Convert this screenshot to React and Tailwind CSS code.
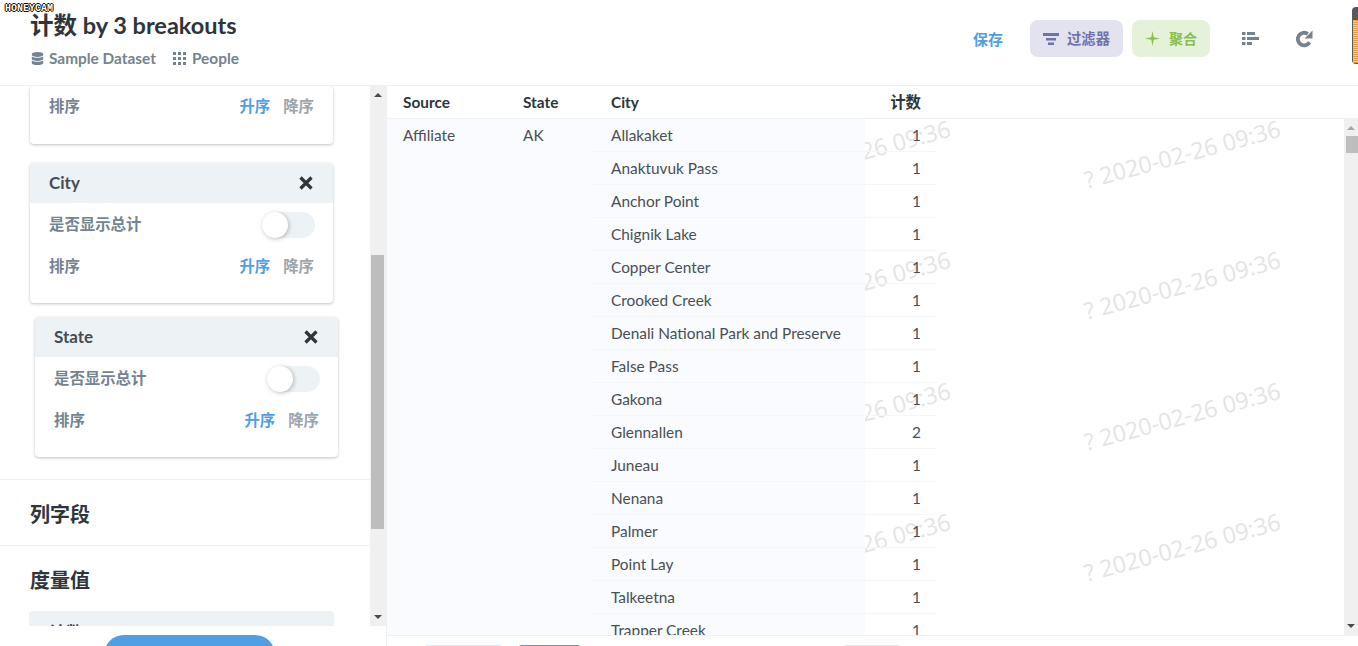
import React from "react";
import { FaDatabase } from "react-icons/fa";

const cities = [
  ["Allakaket", 1],
  ["Anaktuvuk Pass", 1],
  ["Anchor Point", 1],
  ["Chignik Lake", 1],
  ["Copper Center", 1],
  ["Crooked Creek", 1],
  ["Denali National Park and Preserve", 1],
  ["False Pass", 1],
  ["Gakona", 1],
  ["Glennallen", 2],
  ["Juneau", 1],
  ["Nenana", 1],
  ["Palmer", 1],
  ["Point Lay", 1],
  ["Talkeetna", 1],
  ["Trapper Creek", 1],
];

const font = "font-['Lato','Noto_Sans_CJK_SC',sans-serif]";

const GridIcon = () => (
  <svg width="13" height="13" viewBox="0 0 13 13" fill="#74838f">
    {[0, 5, 10].map((y) =>
      [0, 5, 10].map((x) => <rect key={`${x}-${y}`} x={x} y={y} width="3" height="3" />)
    )}
  </svg>
);

const FilterIcon = () => (
  <svg width="16" height="12" viewBox="0 0 16 12" fill="#7172ad">
    <rect x="0" y="0" width="16" height="3" />
    <rect x="3" y="5" width="10" height="2.5" />
    <rect x="5" y="9.5" width="6" height="2.5" />
  </svg>
);

const StarIcon = () => (
  <svg width="15" height="15" viewBox="0 0 15 15" fill="#88bf4d">
    <path d="M7.5 0 L8.7 6.3 L15 7.5 L8.7 8.7 L7.5 15 L6.3 8.7 L0 7.5 L6.3 6.3 Z" />
  </svg>
);

const BarsIcon = () => (
  <svg width="17" height="13" viewBox="0 0 17 13" fill="#74838f">
    <rect x="0" y="0" width="3.5" height="3" />
    <rect x="5" y="0" width="8" height="3" />
    <rect x="0" y="5" width="3.5" height="3" />
    <rect x="5" y="5" width="12" height="3" />
    <rect x="0" y="10" width="3.5" height="3" />
    <rect x="5" y="10" width="5" height="3" />
  </svg>
);

const RefreshIcon = () => (
  <svg width="18" height="18" viewBox="0 0 18 18" fill="none">
    <path d="M14.6 12.2 A6.3 6.3 0 1 1 12.8 3.9" stroke="#74838f" strokeWidth="3.8" />
    <path d="M17.5 0.5 L17.5 8.5 L9.5 8.5 Z" fill="#74838f" />
  </svg>
);

const CloseIcon = () => (
  <svg width="14" height="14" viewBox="0 0 14 14" stroke="#2e353b" strokeWidth="3.2">
    <path d="M1.5 1.5 L12.5 12.5 M12.5 1.5 L1.5 12.5" />
  </svg>
);

const SortRow = () => (
  <div className="flex items-center justify-between text-[15.4px] font-bold leading-5 text-[#74838f]">
    <span>排序</span>
    <span className="flex gap-[13px]">
      <span className="text-[#509ee3]">升序</span>
      <span className="text-[#9aa5ad]">降序</span>
    </span>
  </div>
);

const BreakoutCard = ({ name, className }) => (
  <div className={`w-[303px] rounded-sm bg-white shadow-[0_1px_3px_rgba(0,0,0,0.25)] ${className}`}>
    <div className="flex h-[40px] items-center justify-between rounded-t-sm bg-[#edf2f5] pl-[19px] pr-[20px]">
      <span className="text-[17px] font-bold text-[#444c54]">{name}</span>
      <CloseIcon />
    </div>
    <div className="px-[19px] pb-[27px] pt-[9px]">
      <div className="mb-[18px] flex items-center justify-between text-[15.4px] font-bold text-[#74838f]">
        <span>是否显示总计</span>
        <span className="relative -mr-px block h-[26px] w-[53px] rounded-full bg-[#edf2f5]">
          <span className="absolute left-0 top-0 h-[26px] w-[26px] rounded-full bg-white shadow-[1px_1px_4px_rgba(0,0,0,0.25)]" />
        </span>
      </div>
      <SortRow />
    </div>
  </div>
);

export default function App() {
  return (
    <div className={`relative flex h-[646px] w-[1358px] flex-col overflow-hidden bg-white ${font}`}>
      {/* recorder stamp */}
      <div className="absolute left-[5px] top-[3px] z-20 font-['Liberation_Mono',monospace] text-[10px] font-bold leading-[11px] text-white [text-shadow:1px_0_0_#000,-1px_0_0_#000,0_1px_0_#000,0_-1px_0_#000]">
        HONEYCAM
      </div>
      <div className="absolute right-0 top-[7px] z-20 h-[57px] w-[6px] rounded-l bg-[#565a5e] pb-[1px] pl-[1px] pt-[13px]">
        <div className="h-full w-full bg-[repeating-linear-gradient(#e39a3c_0,#e39a3c_1px,#f3d3a8_1px,#f3d3a8_2px)]" />
      </div>

      {/* header */}
      <header className="flex h-[86px] shrink-0 items-start justify-between border-b border-[#f0f0f0] pl-[30px] pr-[45px]">
        <div>
          <h1 className="mt-[10px] text-[23.5px] font-bold leading-[30px] text-[#2e353b]">计数 by 3 breakouts</h1>
          <div className="ml-px mt-[7px] flex items-center text-[15.4px] font-bold leading-[22px] text-[#74838f]">
            <FaDatabase className="mr-[5px] text-[13px]" />
            <span>Sample Dataset</span>
            <span className="ml-[17px] mr-[6px] flex"><GridIcon /></span>
            <span>People</span>
          </div>
        </div>
        <div className="mt-[20px] flex items-center text-[15px] font-bold">
          <span className="mr-[27px] pt-[2px] text-[#509ee3]">保存</span>
          <div className="mr-[9px] flex h-[37px] w-[93px] items-center justify-center gap-[8px] rounded-lg bg-[#e3e3ef] text-[#7172ad]">
            <FilterIcon />
            <span className="text-[14.3px]">过滤器</span>
          </div>
          <div className="mr-[32px] flex h-[37px] w-[78px] items-center justify-center gap-[9px] rounded-lg bg-[#e6f1d9] text-[#88bf4d]">
            <StarIcon />
            <span className="text-[14px]">聚合</span>
          </div>
          <span className="mr-[36px] flex"><BarsIcon /></span>
          <RefreshIcon />
        </div>
      </header>

      <div className="flex min-h-0 flex-1">
        {/* sidebar */}
        <aside className="flex h-full w-[387px] shrink-0 flex-col border-r border-[#f0f0f0]">
          <div className="relative flex h-[540px] shrink-0 overflow-hidden">
            <div className="min-w-0 flex-1 overflow-hidden">
              <div className="ml-[30px] w-[303px] rounded-sm bg-white px-[19px] pb-[28px] pt-[10px] shadow-[0_1px_3px_rgba(0,0,0,0.25)]">
                <SortRow />
              </div>
              <BreakoutCard name="City" className="ml-[30px] mt-[19px]" />
              <BreakoutCard name="State" className="ml-[35px] mt-[14px]" />
              <div className="mt-[22px] border-t border-[#f0f0f0] pl-[30px] pt-[3px] text-xl font-bold leading-[62px] text-[#2e353b]">
                列字段
              </div>
              <div className="border-t border-[#f0f0f0] pl-[30px] pt-[19px] text-xl font-bold leading-[30px] text-[#2e353b]">
                度量值
              </div>
              <div className="ml-[29px] mt-[16px] h-[40px] w-[305px] rounded-sm bg-[#edf2f5] pl-[20px] pt-[9px] text-[17px] font-bold text-[#444c54]">
                计数
              </div>
            </div>
            {/* scrollbar */}
            <div className="relative w-[16px] shrink-0 bg-[#f0f0f0]">
              <div className="absolute left-[4px] top-[7px] h-0 w-0 border-x-[4px] border-b-[4px] border-x-transparent border-b-[#4a4a4a]" />
              <div className="absolute left-[1px] top-[169px] h-[274px] w-[13px] bg-[#bdbdbd]" />
              <div className="absolute bottom-[7px] left-[4px] h-0 w-0 border-x-[4px] border-t-[4px] border-x-transparent border-t-[#4a4a4a]" />
            </div>
          </div>
          <div className="relative flex-1 overflow-hidden">
            <div className="absolute left-[104px] top-[9px] h-[40px] w-[171px] rounded-full bg-[#509ee3]" />
          </div>
        </aside>

        {/* table */}
        <main className="flex min-w-0 flex-1 flex-col">
          <div className="flex h-[33px] shrink-0 items-center border-b border-[#f0f0f0] pt-px text-[15.4px] font-bold text-[#2e353b]">
            <span className="w-[136px] pl-[16px]">Source</span>
            <span className="w-[88px]">State</span>
            <span className="w-[250px]">City</span>
            <span className="w-[60px] text-right">计数</span>
          </div>
          <div className="flex h-[517px] shrink-0 overflow-hidden border-b border-[#f0f0f0]">
            <div className="relative flex min-w-0 flex-1 overflow-hidden">
              {/* watermark layer */}
              <div className="absolute inset-y-0 left-[478px] right-0 overflow-hidden">
                <div className="-mt-[15px] ml-[-141px] grid w-[700px] grid-cols-[330px_330px] auto-rows-[131px]">
                  {Array.from({ length: 10 }).map((_, i) => (
                    <span
                      key={i}
                      className="flex h-[82px] -rotate-[15deg] items-center whitespace-nowrap pl-[26px] font-['Open_Sans',sans-serif] text-[23.2px] font-normal leading-none text-[#e4e4e4]"
                    >
                      ? 2020-02-26 09:36
                    </span>
                  ))}
                </div>
              </div>
              <div className="flex h-full w-[204px] shrink-0 bg-[#f9fbfe] text-[15.4px] leading-[33px] text-[#4a4f54]">
                <span className="w-[136px] pl-[16px]">Affiliate</span>
                <span>AK</span>
              </div>
              <div className="relative w-[346px] shrink-0">
                {cities.map(([city, count], i) => (
                  <div key={i} className="flex h-[33px] border-b border-[#f5f6f8] text-[15.4px] leading-[33px] text-[#4a4f54]">
                    <span className="w-[274px] whitespace-nowrap bg-[#f9fbfe] pl-[20px]">{city}</span>
                    <span className="w-[72px] pr-[16px] text-right">{count}</span>
                  </div>
                ))}
              </div>
            </div>
            <div className="relative w-[14px] shrink-0 bg-[#f0f0f0]">
              <div className="absolute left-[3px] top-[7px] h-0 w-0 border-x-[4px] border-b-[4px] border-x-transparent border-b-[#a0a8b4]" />
              <div className="absolute left-[2px] top-[17px] h-[17px] w-[12px] bg-[#bdbdbd]" />
              <div className="absolute bottom-[7px] left-[3px] h-0 w-0 border-x-[4px] border-t-[4px] border-x-transparent border-t-[#4a4a4a]" />
            </div>
          </div>
          {/* footer, only the top edge of its buttons is in the window */}
          <div className="relative flex-1 overflow-hidden">
            <div className="absolute left-[37px] top-[9px] h-[10px] w-[79px] rounded-t-sm bg-[#d9e8f2]" />
            <div className="absolute left-[131px] top-[9px] h-[10px] w-[63px] rounded-t-sm bg-[#509ee3]" />
            <div className="absolute left-[456px] top-[9px] h-[10px] w-[58px] rounded-t-sm bg-[#e5e8ea]" />
          </div>
        </main>
      </div>
    </div>
  );
}
